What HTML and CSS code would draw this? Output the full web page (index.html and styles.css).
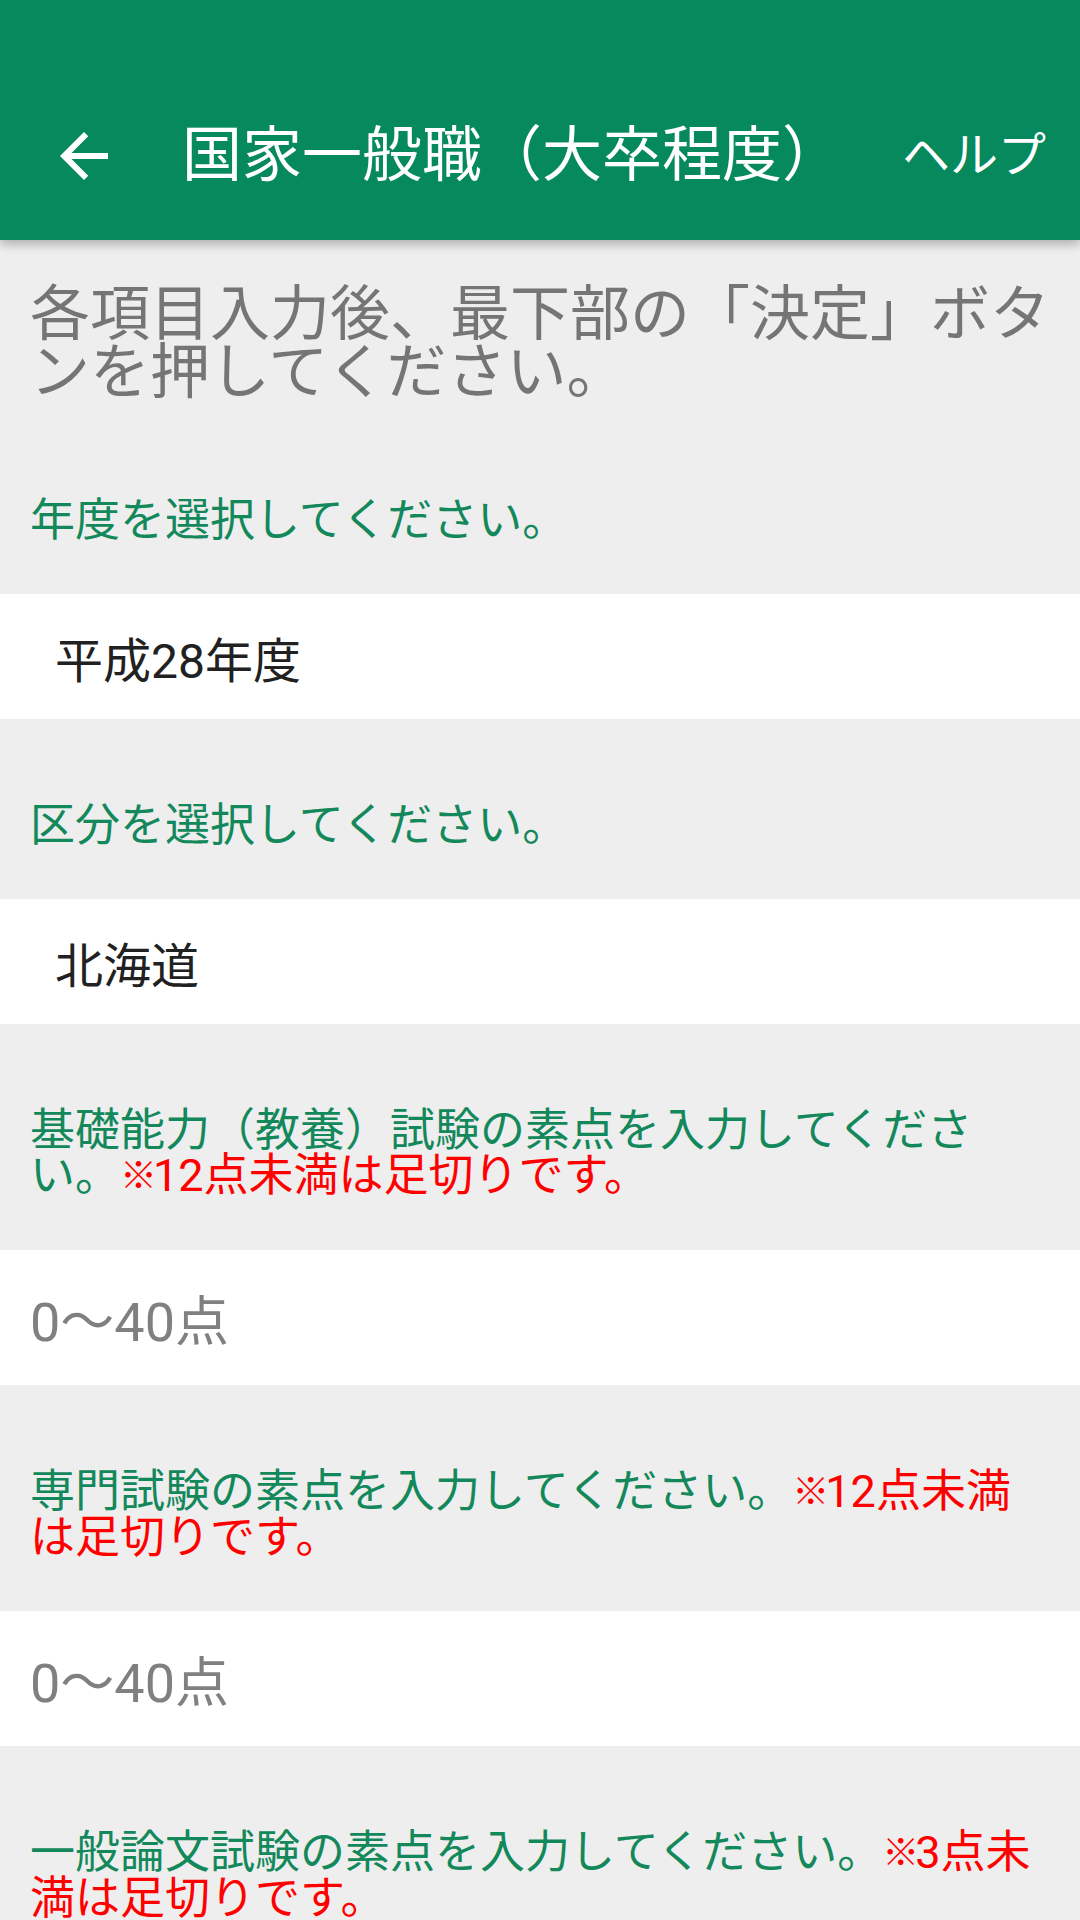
FILE: index.html
```html
<!DOCTYPE html>
<html lang="ja">
<head>
<meta charset="utf-8">
<title>国家一般職（大卒程度）</title>
<link rel="stylesheet" href="styles.css">
</head>
<body>
<header class="appbar">
  <div class="toolbar">
    <div class="nav-btn">
      <svg class="nav-icon" viewBox="0 0 24 24" width="72" height="72"><path fill="#fff" d="M20 11H7.83l5.59-5.59L12 4l-8 8 8 8 1.41-1.41L7.83 13H20v-2z"/></svg>
    </div>
    <div class="title">国家一般職（大卒程度）</div>
    <div class="menu">ヘルプ</div>
  </div>
</header>
<main class="content">
  <p class="intro">各項目入力後、最下部の「決定」ボタンを押してください。</p>

  <div class="label">年度を選択してください。</div>
  <div class="spinner-row">平成28年度</div>

  <div class="label">区分を選択してください。</div>
  <div class="spinner-row">北海道</div>

  <div class="label">基礎能力（教養）試験の素点を入力してください。<span class="warn"><span class="mark">※</span>12点未満は足切りです。</span></div>
  <div class="edit-row">0〜40点</div>

  <div class="label">専門試験の素点を入力してください。<span class="warn"><span class="mark">※</span>12点未満は足切りです。</span></div>
  <div class="edit-row">0〜40点</div>

  <div class="label">一般論文試験の素点を入力してください。<span class="warn"><span class="mark">※</span>3点未満は足切りです。</span></div>
  <div class="edit-row">0〜40点</div>
</main>
</body>
</html>
```
FILE: styles.css
```css
html, body {
  margin: 0;
  padding: 0;
}
body {
  width: 1080px;
  min-height: 1920px;
  background: #eeeeee;
  font-family: Roboto, "Noto Sans CJK JP", sans-serif;
  overflow: hidden;
}
.appbar {
  height: 240px;
  box-sizing: border-box;
  padding-top: 72px;
  background: #06895c;
  box-shadow: 0 4px 10px rgba(0, 0, 0, 0.28);
  position: relative;
  z-index: 1;
}
.toolbar {
  height: 168px;
  display: flex;
  align-items: center;
  color: #ffffff;
}
.nav-btn {
  width: 168px;
  height: 168px;
  display: flex;
  align-items: center;
  justify-content: center;
  flex: none;
}
.nav-icon {
  display: block;
}
.title {
  margin-left: 14px;
  font-size: 60px;
  line-height: 70px;
  flex: 1;
  white-space: nowrap;
}
.menu {
  font-size: 48px;
  line-height: 60px;
  padding-right: 34px;
  flex: none;
}
.content {
  display: flex;
  flex-direction: column;
}
.intro {
  margin: 0;
  padding: 46px 30px 12px 30px;
  font-size: 60px;
  line-height: 58px;
  color: #757575;
}
.label {
  padding: 84px 35px 51px 30px;
  font-size: 45px;
  line-height: 45px;
  color: #13885b;
}
.warn {
  color: #ff0000;
}
.mark {
  font-size: 37px;
  letter-spacing: -4px;
  vertical-align: 2px;
  font-weight: bold;
}
.spinner-row {
  height: 125px;
  display: flex;
  align-items: center;
  padding-left: 55px;
  background: #ffffff;
  font-size: 48px;
  color: #212121;
}
.edit-row {
  height: 135px;
  display: flex;
  align-items: center;
  padding-left: 30px;
  background: #ffffff;
  font-size: 54px;
  color: #808080;
}
```
